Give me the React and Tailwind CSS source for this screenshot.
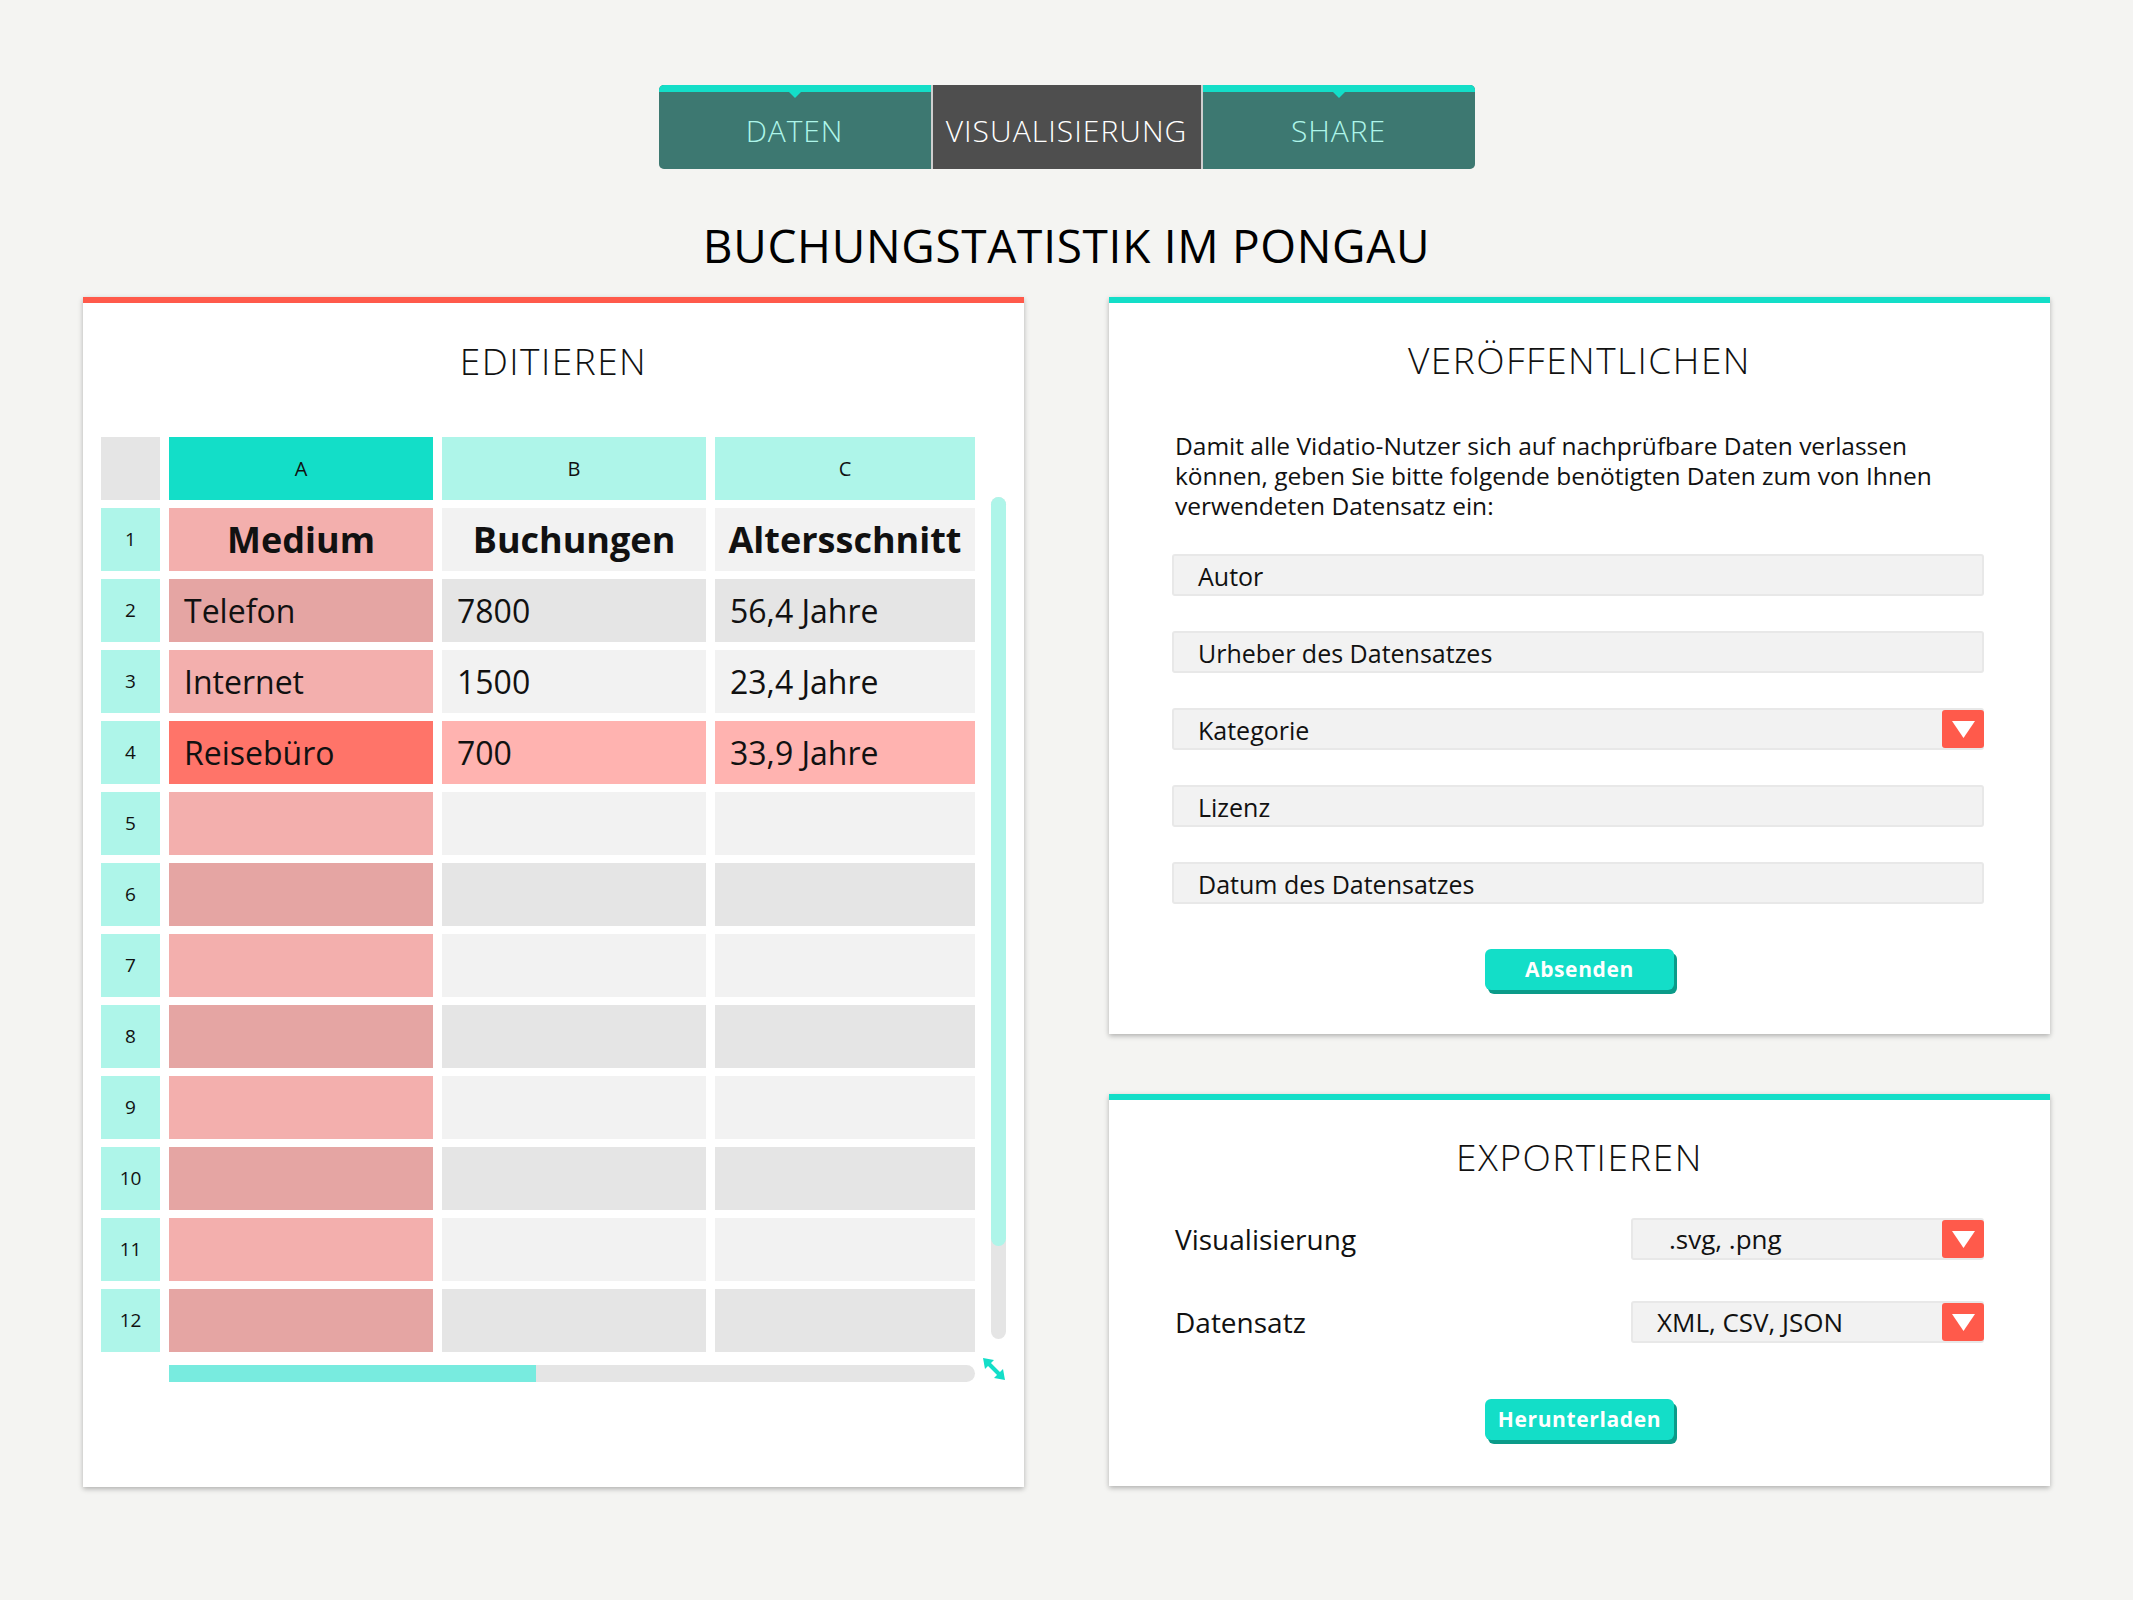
import React from 'react';

// Tabellen-Daten (Zeile 1 = Kopfzeile im Blatt)
const rows = [
  ['Medium', 'Buchungen', 'Altersschnitt'],
  ['Telefon', '7800', '56,4 Jahre'],
  ['Internet', '1500', '23,4 Jahre'],
  ['Reisebüro', '700', '33,9 Jahre'],
  ['', '', ''],
  ['', '', ''],
  ['', '', ''],
  ['', '', ''],
  ['', '', ''],
  ['', '', ''],
  ['', '', ''],
  ['', '', ''],
];

const fields = ['Autor', 'Urheber des Datensatzes', 'Kategorie', 'Lizenz', 'Datum des Datensatzes'];

function DropArrow({ className }) {
  return (
    <div className={`w-[42px] h-full rounded-[3px] bg-[#ff5a4b] flex items-center justify-center ${className || ''}`}>
      <svg width="23" height="17" viewBox="0 0 23 17">
        <polygon points="0,0 23,0 11.5,17" fill="#ffffff" />
      </svg>
    </div>
  );
}

function Tab({ label, active }) {
  if (active) {
    return (
      <div className="w-[268px] h-full border-t-[7px] border-[#4e4e4e] bg-[#4e4e4e] flex items-center justify-center text-white text-[30px] font-light leading-none tracking-[0.035em]">
        {label}
      </div>
    );
  }
  return (
    <div className="relative w-[272px] h-full border-t-[7px] border-[#13dec8] bg-[#3d7871] flex items-center justify-center text-[#aef5e9] text-[30px] font-light leading-none tracking-[0.03em]">
      <svg className="absolute top-0 left-1/2 -translate-x-1/2" width="12" height="6" viewBox="0 0 12 6">
        <polygon points="0,0 12,0 6,6" fill="#13dec8" />
      </svg>
      {label}
    </div>
  );
}

function cellColor(r, c) {
  if (r === 3) return c === 0 ? 'bg-[#ff7469]' : 'bg-[#ffb3b0]';
  if (c === 0) return r % 2 === 0 ? 'bg-[#f3afad]' : 'bg-[#e5a5a3]';
  return r % 2 === 0 ? 'bg-[#f2f2f2]' : 'bg-[#e5e5e5]';
}

function Button({ children }) {
  return (
    <button className="w-[189px] h-[41px] rounded-[6px] bg-[#13dec8] shadow-[3px_4px_0_0_#0b9b89] text-white text-[21px] font-bold tracking-[0.03em] leading-none">
      {children}
    </button>
  );
}

export default function App() {
  return (
    <div className="min-h-[1600px] bg-[#f4f4f2] pt-[85px] font-['Open_Sans',sans-serif] text-[#111]">
      {/* Tabs */}
      <div className="flex justify-center">
        <div className="flex h-[84px] rounded-[5px] overflow-hidden bg-[#cfcfcf] gap-[2px]">
          <Tab label="DATEN" />
          <Tab label="VISUALISIERUNG" active />
          <Tab label="SHARE" />
        </div>
      </div>

      <h1 className="mt-[53px] text-center text-[46px] leading-none tracking-[0.015em] text-black">
        BUCHUNGSTATISTIK IM PONGAU
      </h1>

      <div className="mt-[29px] px-[83px] grid grid-cols-2 gap-[85px]">
        {/* EDITIEREN */}
        <div className="h-[1190px] bg-white border-t-[6px] border-[#ff5a4b] shadow-[0_2px_5px_rgba(0,0,0,0.28)] pl-[18px] pt-[39px]">
          <h2 className="text-center pr-[18px] text-[37px] font-light leading-none tracking-[0.04em]">EDITIEREN</h2>

          <div className="mt-[58px] flex">
            <div className="grid grid-cols-[59px_264px_264px_260px] gap-x-[9px] gap-y-[8px] auto-rows-[63px]">
              <div className="bg-[#e5e5e5]" />
              {['A', 'B', 'C'].map((h, i) => (
                <div
                  key={h}
                  className={`flex items-center justify-center text-[20px] ${i === 0 ? 'bg-[#13dec8]' : 'bg-[#aef5e9]'}`}
                >
                  {h}
                </div>
              ))}
              {rows.map((row, r) => (
                <React.Fragment key={r}>
                  <div className="bg-[#aef5e9] flex items-center justify-center text-[19px]">{r + 1}</div>
                  {row.map((val, c) => (
                    <div
                      key={c}
                      className={`${cellColor(r, c)} flex items-center text-[32px] ${
                        r === 0 ? 'justify-center font-bold text-[36px]' : 'pl-[15px]'
                      }`}
                    >
                      {val}
                    </div>
                  ))}
                </React.Fragment>
              ))}
            </div>

            {/* vertikaler Scrollbalken */}
            <div className="ml-[16px] mt-[60px] w-[15px] h-[842px] rounded-full bg-[#e5e5e5]">
              <div className="h-[749px] rounded-full bg-[#aef5e9]" />
            </div>
          </div>

          <div className="mt-[13px] flex items-start">
            <div className="ml-[68px] w-[806px] h-[17px] rounded-l-[6px] rounded-r-full bg-[#e5e5e5] overflow-hidden">
              <div className="w-[367px] h-full bg-[#78ebdf]" />
            </div>
            <svg className="ml-[8px] -mt-[7px]" width="22" height="22" viewBox="0 0 22 22">
              <path d="M5 5 L17 17" stroke="#13dec8" strokeWidth="4" />
              <polygon points="0,0 11,2 2,11" fill="#13dec8" />
              <polygon points="22,22 11,20 20,11" fill="#13dec8" />
            </svg>
          </div>
        </div>

        <div className="flex flex-col gap-[60px]">
          {/* VERÖFFENTLICHEN */}
          <div className="h-[737px] bg-white border-t-[6px] border-[#13dec8] shadow-[0_2px_5px_rgba(0,0,0,0.28)] pl-[63px] pr-[66px] pt-[38px] flex flex-col">
            <h2 className="text-center pl-[3px] text-[37px] font-light leading-none tracking-[0.04em]">VERÖFFENTLICHEN</h2>
            <p className="mt-[53px] pl-[3px] text-[24.5px] leading-[30px] text-[#111]">
              Damit alle Vidatio-Nutzer sich auf nachprüfbare Daten verlassen
              <br />
              können, geben Sie bitte folgende benötigten Daten zum von Ihnen
              <br />
              verwendeten Datensatz ein:
            </p>
            <div className="mt-[33px] flex flex-col gap-[35px]">
              {fields.map((f) => (
                <div
                  key={f}
                  className="h-[42px] rounded-[3px] bg-[#f2f2f2] border-2 border-[#e8e8e8] flex items-center justify-between"
                >
                  <span className="pl-[24px] pt-[2px] text-[25px] leading-none">{f}</span>
                  {f === 'Kategorie' && <DropArrow className="-mr-[2px] h-[42px]" />}
                </div>
              ))}
            </div>
            <div className="mt-[45px] flex justify-center pl-[3px]">
              <Button>Absenden</Button>
            </div>
          </div>

          {/* EXPORTIEREN */}
          <div className="h-[392px] bg-white border-t-[6px] border-[#13dec8] shadow-[0_2px_5px_rgba(0,0,0,0.28)] pl-[63px] pr-[66px] pt-[38px] flex flex-col">
            <h2 className="text-center pl-[3px] text-[37px] font-light leading-none tracking-[0.04em]">EXPORTIEREN</h2>
            <div className="mt-[43px] flex flex-col gap-[41px]">
              {[
                ['Visualisierung', '.svg, .png', 'pl-[36px]'],
                ['Datensatz', 'XML, CSV, JSON', 'pl-[24px]'],
              ].map(([label, value, pad]) => (
                <div key={label} className="flex items-center justify-between pl-[3px]">
                  <span className="text-[28px] leading-none">{label}</span>
                  <div className="w-[353px] h-[42px] rounded-[3px] bg-[#f2f2f2] border-2 border-[#e8e8e8] flex items-center justify-between">
                    <span className={`${pad} text-[26px] leading-none`}>{value}</span>
                    <DropArrow className="-mr-[2px] h-[42px]" />
                  </div>
                </div>
              ))}
            </div>
            <div className="mt-[56px] flex justify-center pl-[3px]">
              <Button>Herunterladen</Button>
            </div>
          </div>
        </div>
      </div>
    </div>
  );
}
